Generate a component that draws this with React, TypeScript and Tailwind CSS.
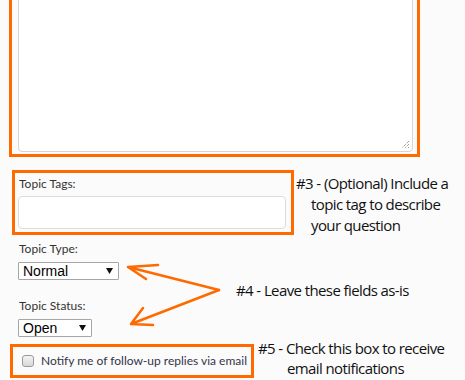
import React from "react";

const orange = "#ff6a00";

function FakeSelect({ value, width }: { value: string; width: string }) {
  return (
    <div
      className={`${width} h-[18px] flex items-center justify-between border border-[#a6a6a6] rounded-[1px] bg-white pl-[4px] pr-[5px] text-[14px] leading-none text-black`}
      style={{ fontFamily: "'Liberation Sans', Arial, sans-serif" }}
    >
      <span>{value}</span>
      <svg width="7" height="6" viewBox="0 0 7 6">
        <path d="M0 0 L7 0 L3.5 6 Z" fill="#111" />
      </svg>
    </div>
  );
}

export default function App() {
  return (
    <main className="relative w-[465px] h-[380px] overflow-hidden bg-[#fbfbfb]">
      <div className="flex flex-col" style={{ fontFamily: "Lato, 'Open Sans', sans-serif" }}>
        {/* MESSAGE BOX */}
        <div className="mt-[-20px] ml-[9px] w-[411px] h-[177px] border-[3px] border-[#ff6a00] pl-[6px] pr-[4px] pb-[2px] flex">
          <div className="relative flex-1 border border-[#d6d6d6] rounded-[4px] bg-white">
            <svg className="absolute right-[2px] bottom-[2px]" width="9" height="9" viewBox="0 0 9 9">
              <path d="M8 1 L1 8 M8 4 L4 8 M8 7 L7 8" stroke="#777" strokeWidth="1" strokeDasharray="1 1" />
            </svg>
          </div>
        </div>

        {/* TAGS */}
        <div className="mt-[13px] flex items-start">
          <div className="ml-[12px] w-[282px] h-[65px] border-[3px] border-[#ff6a00] pl-[3px] pr-[5px] pt-[3px] flex flex-col">
            <p className="text-[12px] leading-[15px] text-[#333] pl-[1px]">Topic Tags:</p>
            <div className="mt-[5px] h-[33px] border border-[#dcdcdc] rounded-[4px] bg-white" />
          </div>
          <div
            className="mt-[3px] ml-[2px] text-[15px] leading-[21px] text-[#111]"
            style={{ fontFamily: "'Open Sans', sans-serif", letterSpacing: "-0.6px" }}
          >
            <p>#3 - (Optional) Include a</p>
            <p className="pl-[15px]">topic tag to describe</p>
            <p className="pl-[15px]">your question</p>
          </div>
        </div>

        {/* TYPE / STATUS */}
        <div className="flex items-start">
          <div className="ml-[18px] w-[218px] flex flex-col">
            <p className="mt-[5px] text-[12px] leading-[15px] text-[#333] pl-[1px]">Topic Type:</p>
            <div className="mt-[6px]">
              <FakeSelect value="Normal" width="w-[101px]" />
            </div>
            <p className="mt-[18px] text-[12px] leading-[15px] text-[#333] pl-[1px]">Topic Status:</p>
            <div className="mt-[6px]">
              <FakeSelect value="Open" width="w-[74px]" />
            </div>
          </div>
          <p
            className="mt-[44px] text-[15px] leading-[21px] text-[#111]"
            style={{ fontFamily: "'Open Sans', sans-serif", letterSpacing: "-0.6px" }}
          >
            #4 - Leave these fields as-is
          </p>
        </div>

        {/* NOTIFY */}
        <div className="mt-[1px] flex items-start">
          <div className="mt-[6px] ml-[10px] w-[244px] h-[34px] border-[3px] border-[#ff6a00] flex items-center pl-[9px] gap-[7px]">
            <div className="w-[12px] h-[12px] rounded-[3px] border border-[#9a9a9a] bg-gradient-to-b from-[#f4f4f4] to-[#d8d8d8]" />
            <span className="text-[12px] text-[#343448]">Notify me of follow-up replies via email</span>
          </div>
          <div
            className="ml-[4px] text-[15px] leading-[20px] text-[#111]"
            style={{ fontFamily: "'Open Sans', sans-serif", letterSpacing: "-0.6px" }}
          >
            <p>#5 - Check this box to receive</p>
            <p className="pl-[29px]">email notifications</p>
          </div>
        </div>
      </div>

      {/* ARROWS */}
      <svg className="absolute inset-0 pointer-events-none" width="465" height="380">
        <g stroke={orange} strokeWidth="2.5" strokeLinecap="round" strokeLinejoin="round" fill="none">
          <path d="M219 290 L128 267 M158 265 L128 267 L146 279" />
          <path d="M219 290 L131 324 M143 308 L131 324 L153 325" />
        </g>
      </svg>
    </main>
  );
}
